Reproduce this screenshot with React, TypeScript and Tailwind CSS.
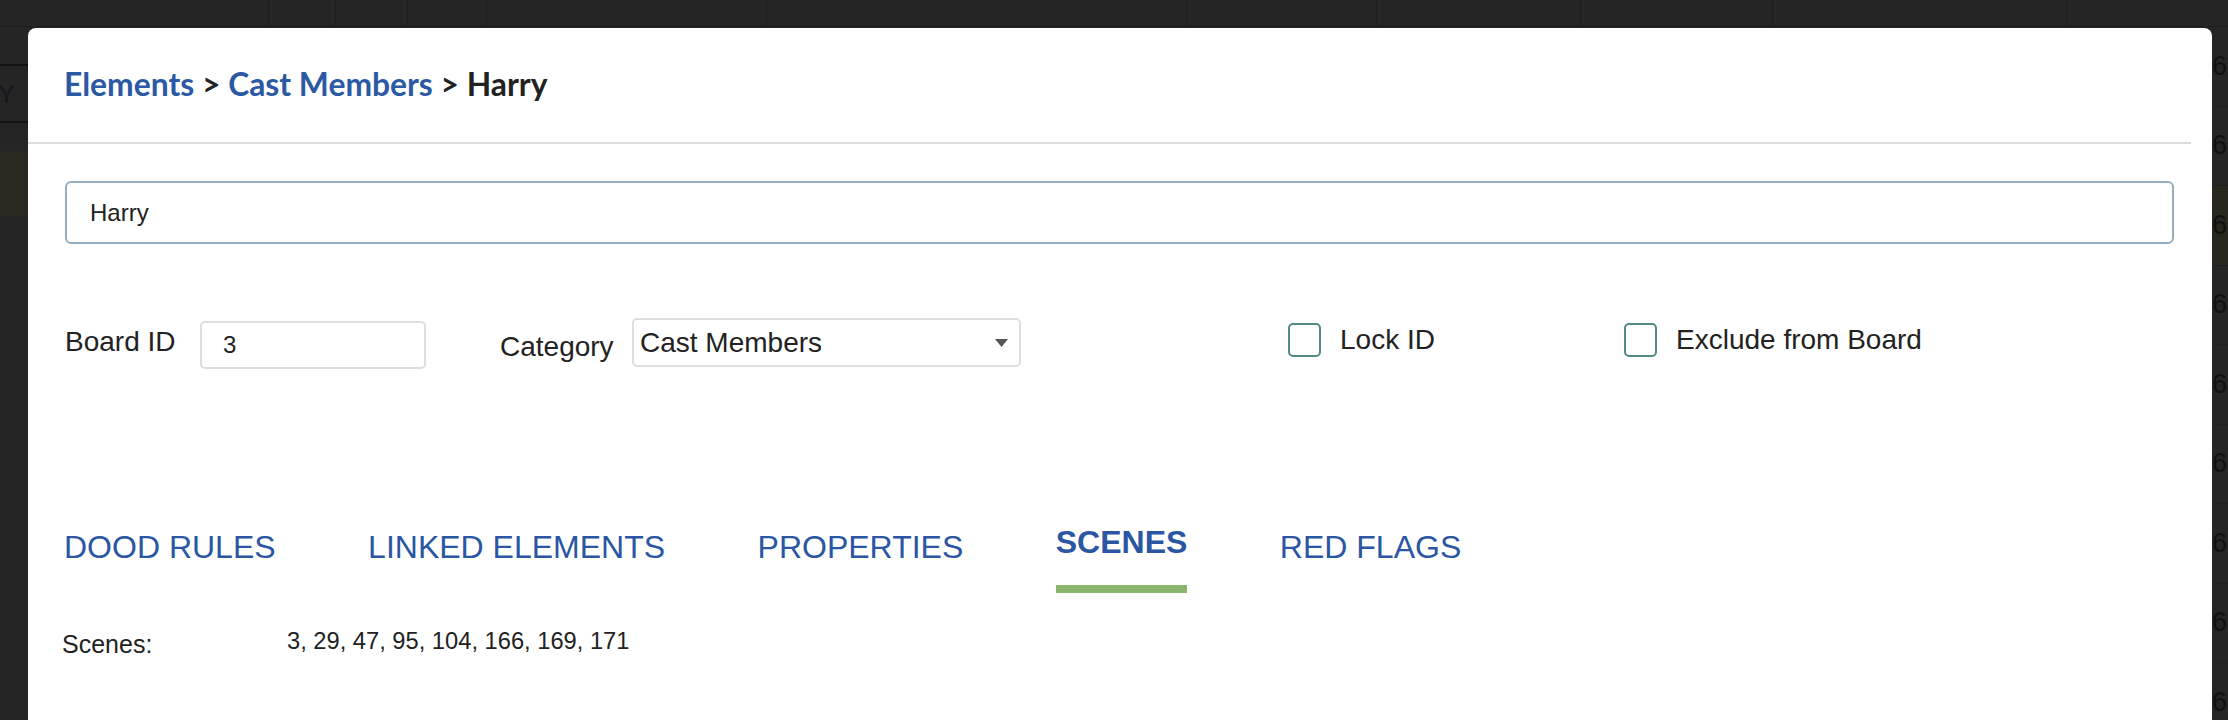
import React from 'react';

const topCells = [269, 67, 72, 79, 280, 420, 190, 204, 192, 294];
const rightRows = [0, 1, 2, 3, 4, 5, 6, 7, 8];
const tabs = ['DOOD RULES', 'LINKED ELEMENTS', 'PROPERTIES', 'SCENES', 'RED FLAGS'];

function Backdrop() {
  return (
    <div className="absolute inset-0 flex flex-col">
      {/* table header strip behind the overlay */}
      <div className="flex h-[27px] shrink-0 border-b border-[#1e1e1e]">
        {topCells.map((w, i) => (
          <div key={i} className="h-full border-r border-[#1d1d1d]" style={{ width: w }} />
        ))}
      </div>
      <div className="flex flex-1 justify-between">
        <div className="flex w-[28px] flex-col">
          <div className="h-[37px] shrink-0" />
          <div className="flex h-[59px] shrink-0 items-center justify-end overflow-hidden border-y-2 border-[#131313] pr-[13px]">
            <span className="text-[26px] leading-none text-[#15181d]">Y</span>
          </div>
          <div className="h-[28px] shrink-0" />
          <div className="h-[65px] shrink-0 bg-[#29271f]" />
        </div>
        <div className="flex w-[16px] flex-col">
          {rightRows.map((i) => (
            <div
              key={i}
              className={
                'flex h-[79.5px] shrink-0 items-center border-b border-[#1f1f1f] text-[27px] leading-none text-[#111] ' +
                (i === 2 ? 'bg-[#28271f]' : '')
              }
            >
              6
            </div>
          ))}
        </div>
      </div>
    </div>
  );
}

function Checkbox({ label, width }: { label: string; width: string }) {
  return (
    <div className={'flex items-start ' + width}>
      <div className="mt-[5px] h-[34px] w-[33px] rounded-[5px] border-2 border-[#4f8b84]" />
      <span className="ml-[19px] mt-[6px] text-[28px] leading-[32px] text-[#222]">{label}</span>
    </div>
  );
}

export default function App() {
  return (
    <div className="relative h-[720px] w-[2228px] overflow-hidden bg-[#252525] font-['Liberation_Sans',Arial,sans-serif]">
      <Backdrop />

      <div className="relative flex h-full pl-[28px] pr-[16px] pt-[28px]">
        <div className="flex flex-1 flex-col rounded-t-[8px] bg-white">
          {/* Breadcrumb */}
          <div className="flex h-[114px] items-center pl-[36px] font-['Lato',sans-serif] text-[31.8px] font-bold leading-none">
            <span className="text-[#2b59a4]">Elements</span>
            <span className="whitespace-pre text-[#222]"> &gt; </span>
            <span className="text-[#2b59a4]">Cast Members</span>
            <span className="whitespace-pre text-[#222]"> &gt; Harry</span>
          </div>
          <div className="mr-[21px] h-[2px] bg-[#dcdcdc]" />

          {/* Name */}
          <div className="ml-[37px] mr-[38px] mt-[37px] flex h-[63px] items-center rounded-[6px] border-2 border-[#95adc5] pl-[23px] text-[24px] text-[#222]">
            Harry
          </div>

          {/* Board ID / Category / checkboxes */}
          <div className="mt-[74px] flex h-[51px] items-start pl-[37px]">
            <span className="mt-[8px] w-[135px] text-[28px] leading-[32px] text-[#222]">Board ID</span>
            <div className="mt-[3px] flex h-[48px] w-[226px] items-center rounded-[5px] border-2 border-[#dedede] pl-[21px] text-[24px] text-[#222]">
              3
            </div>
            <span className="ml-[74px] mt-[13px] w-[132px] text-[28px] leading-[32px] text-[#222]">Category</span>
            <div className="flex h-[49px] w-[389px] items-center justify-between rounded-[5px] border-2 border-[#dedede] pl-[6px] pr-[11px] text-[28px] text-[#222]">
              <span>Cast Members</span>
              <svg width="13" height="8" viewBox="0 0 13 8">
                <polygon points="0,0 13,0 6.5,8" fill="#555" />
              </svg>
            </div>
            <div className="ml-[267px] flex">
              <Checkbox label="Lock ID" width="w-[336px]" />
              <Checkbox label="Exclude from Board" width="w-[400px]" />
            </div>
          </div>

          {/* Tabs */}
          <div className="mt-[155px] flex items-start gap-[92.5px] pl-[36px]">
            {tabs.map((t) =>
              t === 'SCENES' ? (
                <div key={t} className="flex flex-col">
                  <span className="text-[32px] font-bold leading-[36px] text-[#2a56a3]">{t}</span>
                  <div className="mt-[25px] h-[8px] bg-[#8ab66b]" />
                </div>
              ) : (
                <span key={t} className="mt-[5px] text-[32px] leading-[36px] text-[#2a56a3]">
                  {t}
                </span>
              )
            )}
          </div>

          {/* Scenes list */}
          <div className="mt-[34px] flex items-start pl-[34px] text-[#222]">
            <span className="mt-[3px] w-[225px] text-[25px] leading-[28px]">Scenes:</span>
            <span className="text-[23.7px] leading-[28px]">3, 29, 47, 95, 104, 166, 169, 171</span>
          </div>
        </div>
      </div>
    </div>
  );
}
